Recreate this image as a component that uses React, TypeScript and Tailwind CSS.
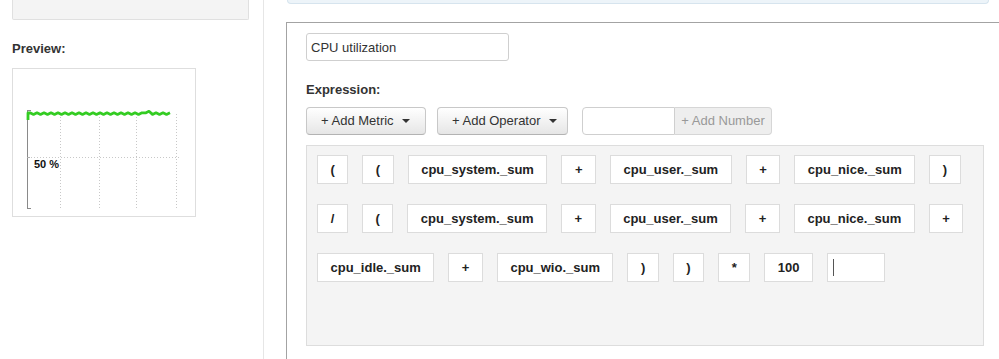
import { useState } from 'react';

type Token = { label: string };

const rows: Token[] = [
  '(', '(', 'cpu_system._sum', '+', 'cpu_user._sum', '+', 'cpu_nice._sum', ')',
  '/', '(', 'cpu_system._sum', '+', 'cpu_user._sum', '+', 'cpu_nice._sum', '+',
  'cpu_idle._sum', '+', 'cpu_wio._sum', ')', ')', '*', '100',
].map((label) => ({ label }));

function Caret() {
  return <span className="ml-[8px] inline-block h-0 w-0 border-x-[4px] border-t-[4px] border-x-transparent border-t-[#333]" />;
}

function PreviewChart() {
  // zigzag approximating the sampled series
  const pts: string[] = ['16,52', '16,45'];
  for (let x = 18, k = 0; x <= 161; x += 3.5, k++) {
    const bump = x > 130 && x < 138 ? -1.5 : 0;
    pts.push(`${x.toFixed(1)},${(k % 2 ? 46.4 : 44.8) + bump}`);
  }

  return (
    <svg width="184" height="149" viewBox="0 0 184 149" className="block">
      {/* grid */}
      {[48, 87, 124, 164].map((x) => (
        <line key={x} x1={x + 0.5} y1="46" x2={x + 0.5} y2="141" stroke="#c8c8c8" strokeDasharray="1 2" />
      ))}
      <line x1="16" y1="89.5" x2="167" y2="89.5" stroke="#c8c8c8" strokeDasharray="1 2" />
      {/* axis */}
      <line x1="15.5" y1="42" x2="15.5" y2="141" stroke="#8a8a8a" />
      <line x1="15" y1="42.5" x2="19" y2="42.5" stroke="#8a8a8a" />
      <line x1="15" y1="140.5" x2="19" y2="140.5" stroke="#8a8a8a" />
      <line x1="15" y1="89.5" x2="18" y2="89.5" stroke="#b0b0b0" />
      {/* series */}
      <polyline points={pts.join(' ')} fill="none" stroke="#33cc22" strokeWidth="2.8" strokeLinejoin="round" />
      <text x="22" y="100" fontSize="11" fontWeight="700" fill="#111" fontFamily="'Liberation Sans', Arial, sans-serif">
        50 %
      </text>
    </svg>
  );
}

export default function App() {
  const [name, setName] = useState('CPU utilization');

  return (
    <div className="flex h-[359px] w-[999px] overflow-hidden bg-white font-['Liberation_Sans',Arial,sans-serif] text-[13px] text-[#333]">
      {/* SIDEBAR */}
      <aside className="w-[264px] shrink-0 border-r border-[#e6e6e6] pl-[12px] pr-[14px]">
        <div className="h-[20px] w-[237px] rounded-b-[2px] border border-t-0 border-[#e0e0e0] bg-[#f4f4f4]" />
        <h4 className="mt-[20px] text-[13px] font-bold leading-[18px] text-[#333]">Preview:</h4>
        <div className="mt-[10px] h-[149px] w-[184px] border border-[#dedede] bg-white">
          <div className="-ml-px -mt-px">
            <PreviewChart />
          </div>
        </div>
      </aside>

      {/* MAIN */}
      <main className="ml-[22px] flex min-w-0 flex-1 flex-col">
        <div className="ml-[1px] h-[4px] w-[702px] shrink-0 rounded-b-[4px] border border-t-0 border-[#d6e4ee] bg-[#edf4f9]" />

        <section className="mt-[18px] flex-1 border-l border-t border-[#a3a3a3] pl-[19px] pt-[10px]">
          <input
            value={name}
            onChange={(e) => setName(e.target.value)}
            className="block h-[28px] w-[203px] rounded-[3px] border border-[#cfcfcf] px-[4px] text-[13px] text-[#333] outline-none"
          />

          <div className="mt-[20px] text-[13px] font-bold leading-[18px]">Expression:</div>

          <div className="mt-[8px] flex items-center">
            <button className="flex h-[28px] w-[120px] items-center rounded-[4px] border border-[#c8c8c8] border-b-[#b3b3b3] bg-gradient-to-b from-white to-[#e6e6e6] pl-[14px] text-[13px] text-[#333]">
              + Add Metric
              <Caret />
            </button>
            <button className="ml-[11px] flex h-[28px] w-[131px] items-center rounded-[4px] border border-[#c8c8c8] border-b-[#b3b3b3] bg-gradient-to-b from-white to-[#e6e6e6] pl-[14px] text-[13px] text-[#333]">
              + Add Operator
              <Caret />
            </button>
            <div className="ml-[14px] flex h-[28px]">
              <input className="h-full w-[93px] rounded-l-[4px] border border-[#cfcfcf] px-[4px] outline-none" />
              <span className="flex h-full w-[97px] items-center justify-center rounded-r-[4px] border border-l-0 border-[#d6d6d6] bg-[#eeeeee] text-[13px] text-[#999]">
                + Add Number
              </span>
            </div>
          </div>

          <div className="mt-[10px] h-[201px] w-[678px] border border-[#dddddd] bg-[#f4f4f4] pl-[10px] pt-[9px]">
            <div className="flex flex-wrap gap-x-[14px] gap-y-[20px]">
              {rows.map((t, idx) => (
                <span
                  key={idx}
                  className="flex h-[29px] min-w-[31px] items-center justify-center border border-[#dcdcdc] bg-white px-[12.5px] text-[13px] font-bold text-[#222]"
                >
                  {t.label}
                </span>
              ))}
              <span className="flex h-[29px] w-[58px] items-center border border-[#dcdcdc] bg-white pl-[5px]">
                <span className="h-[17px] w-px bg-[#555]" />
              </span>
            </div>
          </div>
        </section>
      </main>
    </div>
  );
}
